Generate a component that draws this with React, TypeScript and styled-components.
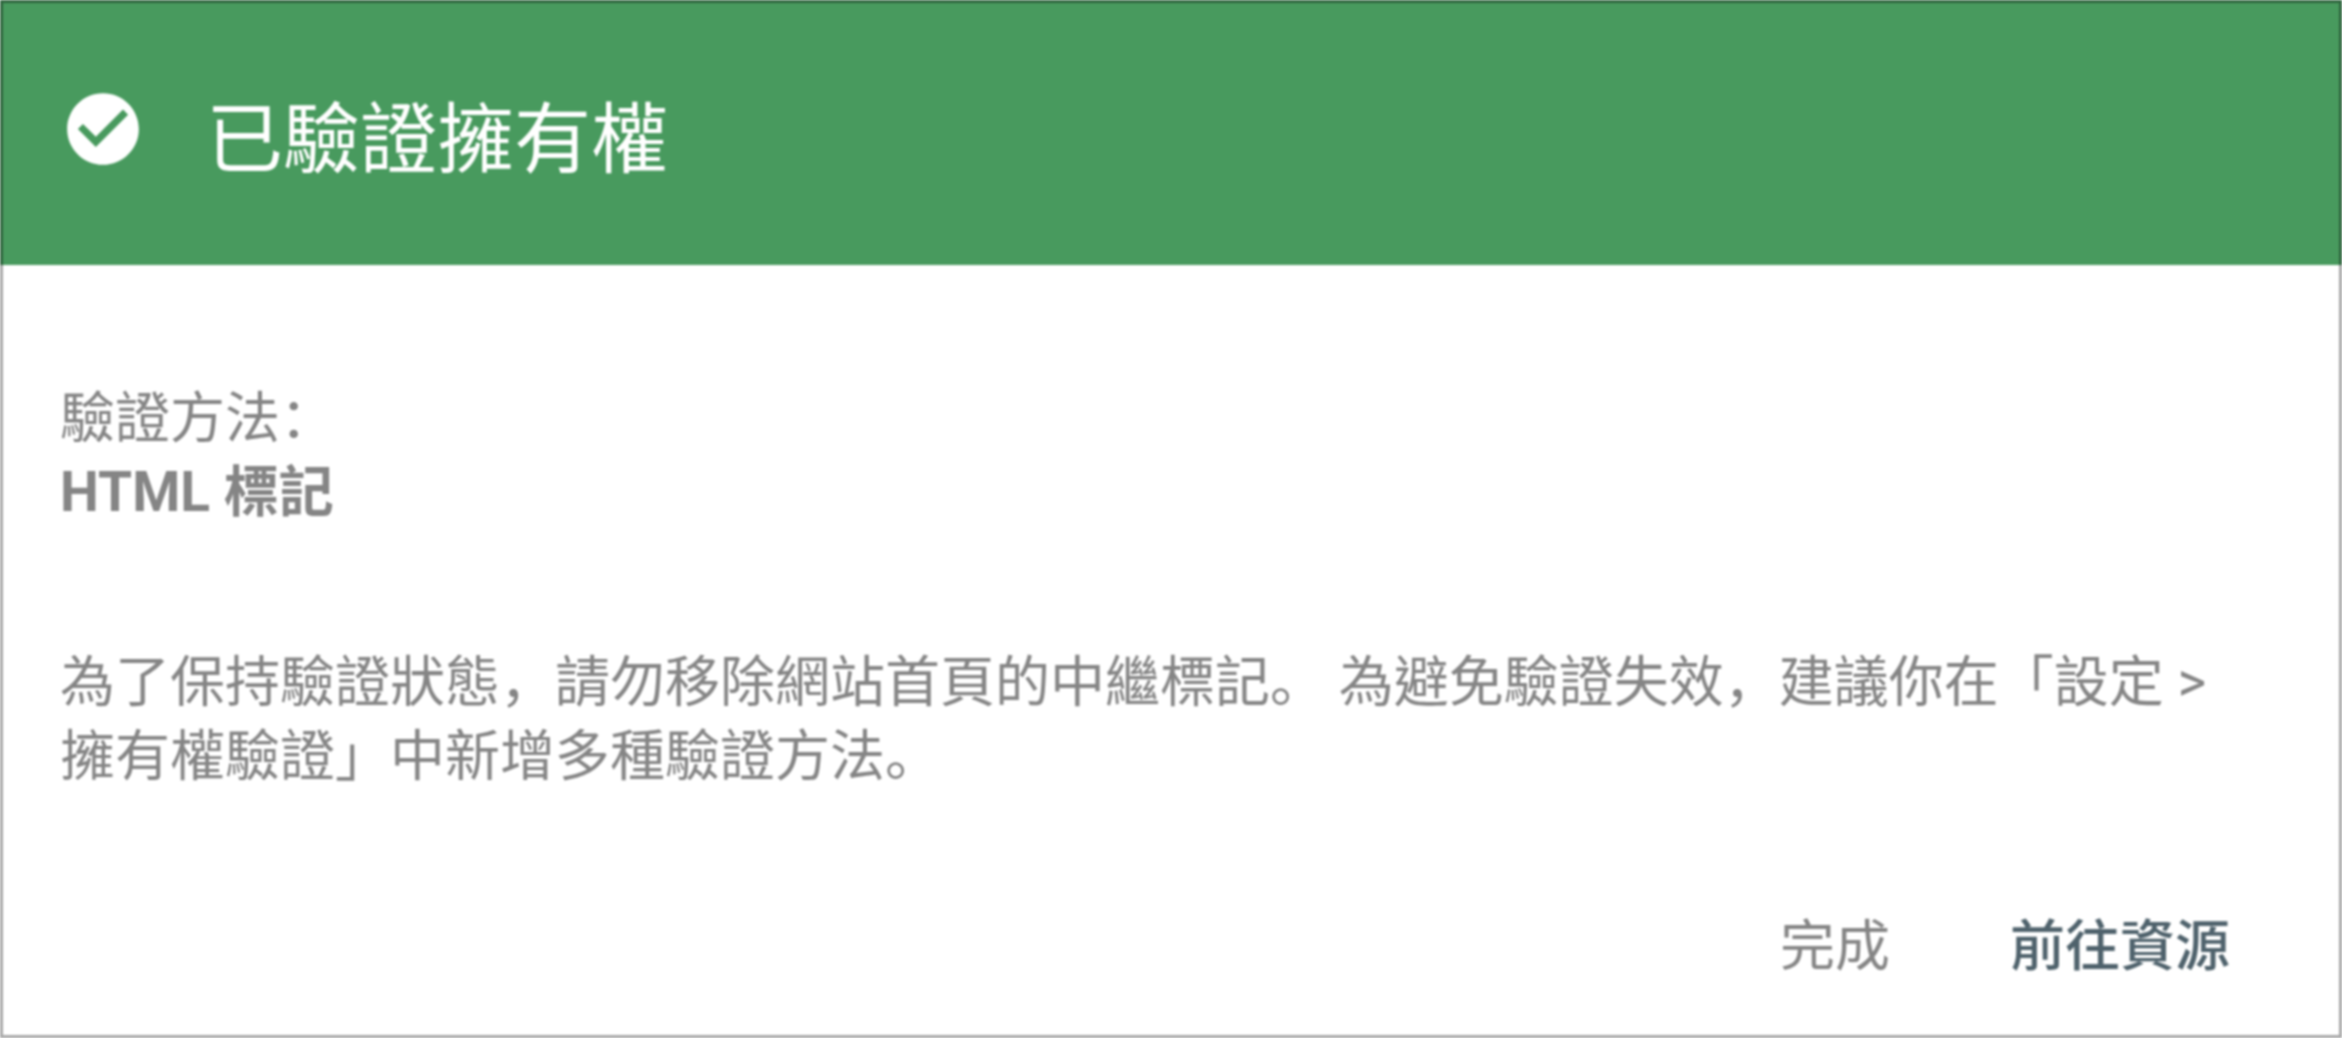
import styled, { createGlobalStyle } from "styled-components";

const GlobalStyle = createGlobalStyle`
  html, body {
    margin: 0;
    padding: 0;
    background: #fff;
  }
  body {
    font-family: Roboto, "Noto Sans CJK TC", sans-serif;
  }
`;

const Dialog = styled.div`
  position: relative;
  width: 2342px;
  height: 1038px;
  box-sizing: border-box;
  background: #fff;
  overflow: hidden;
  filter: blur(1.1px);
  &::after {
    content: "";
    position: absolute;
    inset: 0;
    border: 3px solid rgba(0, 0, 0, 0.34);
    pointer-events: none;
  }
`;

const Header = styled.header`
  display: flex;
  align-items: flex-start;
  gap: 60px;
  height: 265px;
  box-sizing: border-box;
  padding: 86px 0 0 60px;
  background: #489a5e;
  color: #fff;
`;

const Title = styled.h1`
  margin: 3px 0 0;
  font-size: 77px;
  font-weight: 400;
  line-height: 104px;
`;

const Body = styled.div`
  padding: 116px 64px 0 60px;
  font-size: 55px;
  line-height: 74px;
  color: #858585;
`;

const Method = styled.p`
  margin: 0 0 116px;
`;

const MethodName = styled.strong`
  display: block;
  font-weight: 700;
`;

const Note = styled.p`
  margin: 0;
  padding-right: 26px;
`;

const Punct = styled.span`
  font-family: "Noto Sans CJK SC", sans-serif;
  line-height: 1;
`;

const Actions = styled.div`
  display: flex;
  justify-content: flex-end;
  gap: 120px;
  margin-top: 116px;
  padding-right: 48px;
`;

const ActionButton = styled.button<{ $primary?: boolean }>`
  padding: 0;
  border: 0;
  background: none;
  font-family: inherit;
  font-size: 55px;
  line-height: 74px;
  font-weight: ${(p) => (p.$primary ? 500 : 400)};
  color: ${(p) => (p.$primary ? "#4f626c" : "#858585")};
`;

const COMMA = "\uFF0C";
const STOP = "\u3002";
const COLON = "\uFF1A";

function CheckCircle() {
  return (
    <svg width="86" height="86" viewBox="0 0 24 24" fill="#fff">
      <path d="M12 2C6.48 2 2 6.48 2 12s4.48 10 10 10 10-4.48 10-10S17.52 2 12 2zm-2 15l-5-5 1.41-1.41L10 14.17l7.59-7.59L19 8l-9 9z" />
    </svg>
  );
}

export default function App() {
  return (
    <>
      <GlobalStyle />
      <Dialog>
        <Header>
          <CheckCircle />
          <Title>已驗證擁有權</Title>
        </Header>
        <Body>
          <Method>
            驗證方法<Punct>{COLON}</Punct>
            <MethodName>HTML 標記</MethodName>
          </Method>
          <Note>
            為了保持驗證狀態<Punct>{COMMA}</Punct>請勿移除網站首頁的中繼標記<Punct>{STOP}</Punct> 為避免驗證失效<Punct>{COMMA}</Punct>建議你在「設定 &gt; 擁有權驗證」中新增多種驗證方法<Punct>{STOP}</Punct>
          </Note>
          <Actions>
            <ActionButton>完成</ActionButton>
            <ActionButton $primary>前往資源</ActionButton>
          </Actions>
        </Body>
      </Dialog>
    </>
  );
}
